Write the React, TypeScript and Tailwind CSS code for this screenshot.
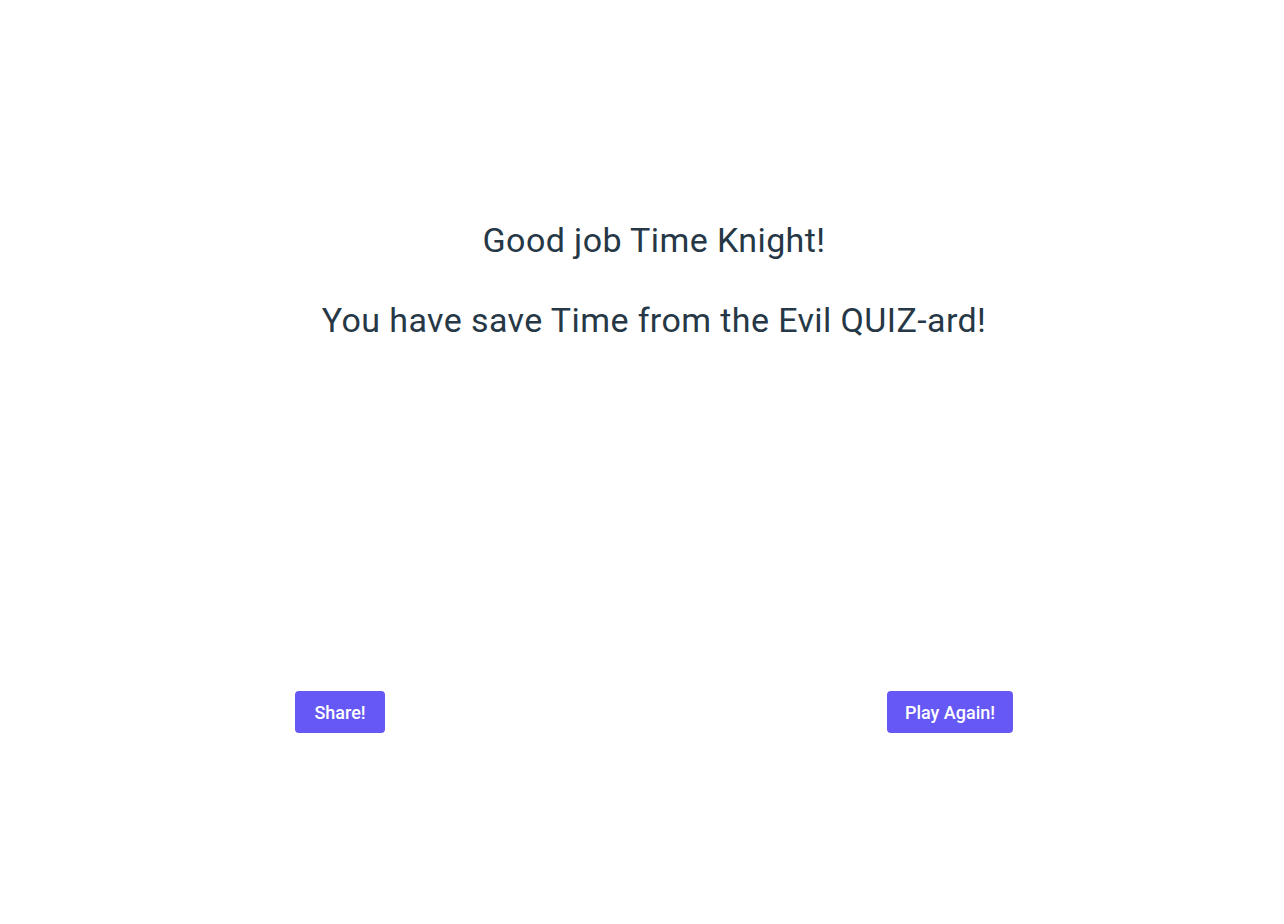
export default function App() {
  return (
    <div className="min-h-screen bg-white font-['Roboto',sans-serif] text-[#263746]">
      <div className="ml-[295px] w-[718px] pt-[220px]">
        <div className="text-center text-[34px] leading-[40px] tracking-[0.4px]">
          <p>Good job Time Knight!</p>
          <p className="mt-[40px]">You have save Time from the Evil QUIZ-ard!</p>
        </div>

        <div className="mt-[351px] flex items-center justify-between">
          <button className="h-[42px] w-[90px] rounded-[4px] bg-[#6558f5] text-[18px] font-medium text-white">
            Share!
          </button>
          <button className="h-[42px] w-[126px] rounded-[4px] bg-[#6558f5] text-[18px] font-medium text-white">
            Play Again!
          </button>
        </div>
      </div>
    </div>
  );
}
